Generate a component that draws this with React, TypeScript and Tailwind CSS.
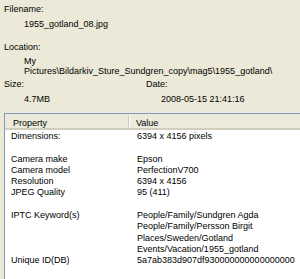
const rows: [string, string][] = [
  ["Dimensions:", "6394 x 4156 pixels"],
  ["", ""],
  ["Camera make", "Epson"],
  ["Camera model", "PerfectionV700"],
  ["Resolution", "6394 x 4156"],
  ["JPEG Quality", "95 (411)"],
  ["", ""],
  ["IPTC Keyword(s)", "People/Family/Sundgren Agda"],
  ["", "People/Family/Persson Birgit"],
  ["", "Places/Sweden/Gotland"],
  ["", "Events/Vacation/1955_gotland"],
  ["Unique ID(DB)", "5a7ab383d907df930000000000000000"],
];

const App = () => {
  return (
    <div className="w-[300px] h-[279px] overflow-hidden bg-[#ECE9D8] text-[9px] text-black font-['Liberation_Sans',Arial,sans-serif]">
      <div className="flex flex-col pl-[4px] pt-[3px] leading-[12px]">
        <div>Filename:</div>
        <div className="mt-[3px] pl-[20px]">1955_gotland_08.jpg</div>
        <div className="mt-[11px]">Location:</div>
        <div className="mt-[3px] pl-[20px] leading-[10px] whitespace-nowrap">
          My
          <br />
          Pictures\Bildarkiv_Sture_Sundgren_copy\mag5\1955_gotland\
        </div>
        <div className="mt-[2px] flex">
          <div className="w-[142px]">Size:</div>
          <div>Date:</div>
        </div>
        <div className="mt-[3px] flex">
          <div className="w-[157px] pl-[20px]">4.7MB</div>
          <div>2008-05-15 21:41:16</div>
        </div>
      </div>

      <div className="ml-[4px] mt-[8px] w-[320px] h-[200px] border border-[#7F9DB9] bg-white">
        <div className="flex h-[16px] bg-[#EBEADB] border-b-2 border-[#D2CEBD] leading-[12px]">
          <div className="w-[123px] pl-[8px] pt-[3px]">Property</div>
          <div className="mt-[2px] h-[11px] border-l border-r border-l-[#C7C4B1] border-r-white" />
          <div className="pl-[6px] pt-[3px]">Value</div>
        </div>
        <div className="grid grid-cols-[126px_1fr] pl-[6px] pt-px leading-[11.3px] whitespace-nowrap">
          {rows.map(([prop, value], i) => (
            <div key={i} className="contents">
              <div className="h-[11.3px]">{prop}</div>
              <div className="h-[11.3px]">{value}</div>
            </div>
          ))}
        </div>
      </div>
    </div>
  );
};

export default App;
